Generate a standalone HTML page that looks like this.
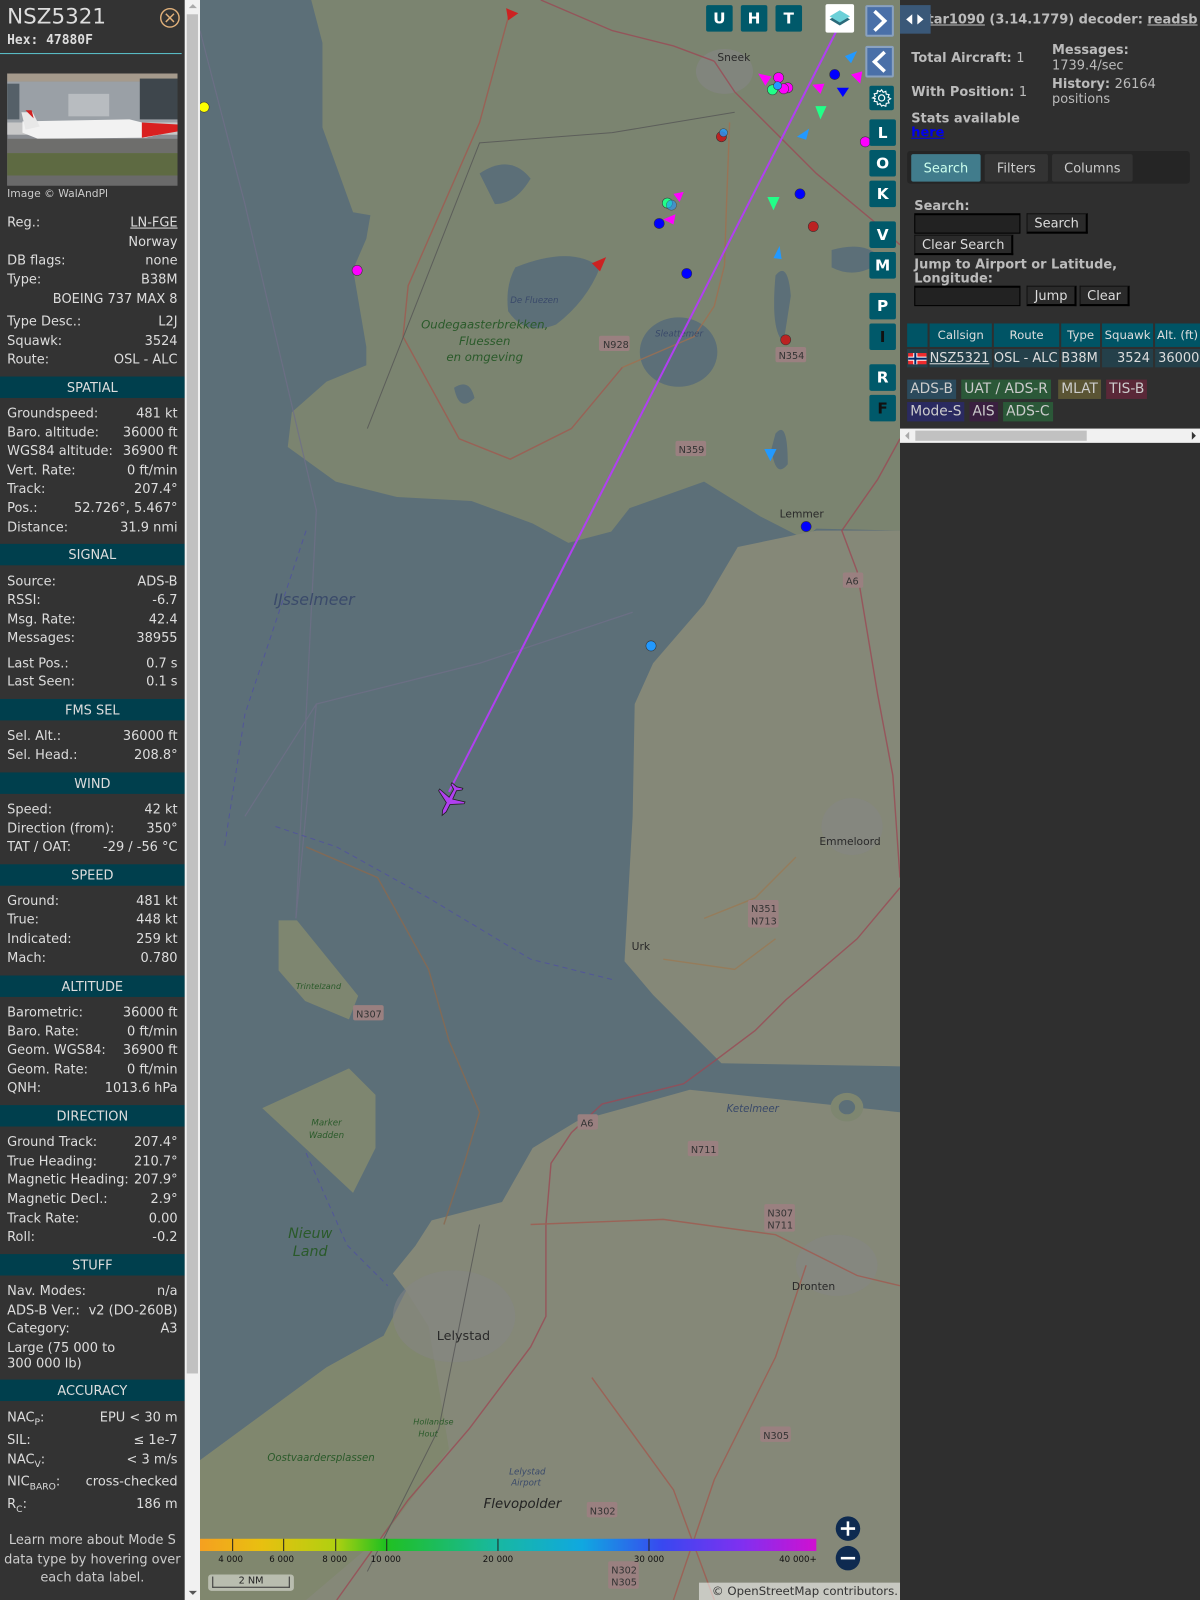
<!DOCTYPE html>
<html><head><meta charset="utf-8">
<style>
html,body{margin:0;padding:0;width:1200px;height:1600px;overflow:hidden;background:#333;}
#w{position:absolute;left:0;top:0;width:1176px;height:1568px;transform:scale(1.020408);transform-origin:0 0;font-family:"DejaVu Sans","Liberation Sans",sans-serif;color:#ddd;font-size:12.7px;}
.a{position:absolute;}
#lp{position:absolute;left:0;top:0;width:181px;height:1568px;background:#333;}
.r{position:absolute;left:7px;right:7px;height:16px;line-height:16px;white-space:nowrap;}
.r b{font-weight:normal;float:right;}
.h{position:absolute;left:0;width:181px;height:21px;line-height:21px;background:#003f4d;text-align:center;color:#ddd;}
#sb{position:absolute;left:181px;top:0;width:15px;height:1568px;background:#f1f1f1;}
#map{position:absolute;left:196px;top:0;width:686px;height:1568px;overflow:hidden;background:#5c6f78;}
.btn{position:absolute;width:26px;height:26px;background:#00596a;color:#fff;font-weight:bold;font-size:15px;text-align:center;line-height:26px;border-radius:2px;font-family:"DejaVu Sans",sans-serif;}
#rp{position:absolute;left:882px;top:0;width:294px;height:1568px;background:#2f2f2f;color:#bbb;}
.t{position:absolute;font-weight:bold;color:#bbb;}
.inp{position:absolute;background:#222;border:1px solid #000;border-top:2px solid #000;}
.bt{position:absolute;background:#2a2a2a;border:1px solid #111;border-right:2px solid #000;border-bottom:2px solid #000;color:#ddd;line-height:17px;text-align:center;font-size:12.7px;}
.th{position:absolute;top:317px;height:23px;line-height:23px;background:#005465;color:#ddd;text-align:center;font-size:11.5px;}
.td{position:absolute;top:342px;height:18px;line-height:18px;background:#24404a;color:#ddd;font-size:12.7px;}
.lg{position:absolute;height:19px;line-height:19px;padding:0 3px;font-size:13.5px;color:#ccc;}
</style></head><body><div id="w">

<div id="lp">
<div class="a" style="left:7px;top:4px;font-size:21px;color:#ddd;">NSZ5321</div>
<div class="a" style="left:7px;top:31px;font-size:12.7px;font-weight:bold;font-family:'DejaVu Sans Mono','Liberation Mono',monospace;color:#ddd;">Hex: 47880F</div>
<svg class="a" style="left:156px;top:7px" width="21" height="21"><circle cx="10.5" cy="10.5" r="9" fill="none" stroke="#e0b07a" stroke-width="1.4"/><path d="M6.5 6.5L14.5 14.5M14.5 6.5L6.5 14.5" stroke="#e0b07a" stroke-width="1.4"/></svg>
<div class="a" style="left:0;top:52px;width:178px;height:1px;background:#5ac3cc;"></div>
<svg class="a" style="left:7px;top:72px" width="167" height="110">
<rect width="167" height="110" fill="#8a8d92"/>
<rect width="167" height="8" fill="#a59a8c"/>
<rect y="8" width="167" height="40" fill="#9aa0a6"/>
<rect x="0" y="10" width="12" height="35" fill="#556068"/><rect x="130" y="5" width="37" height="40" fill="#3e464c"/>
<rect x="60" y="20" width="40" height="22" fill="#b8bcc0"/>
<rect y="48" width="167" height="12" fill="#c8c8c8"/>
<path d="M15 47 L120 45 L140 50 L168 56 L135 63 L30 64 L15 58Z" fill="#f2f2f2"/>
<path d="M132 48 L168 50 L172 56 L132 63Z" fill="#d92020"/>
<path d="M14 38 L25 38 L32 52 L18 55Z" fill="#e8e8e8"/><path d="M18 36 L24 36 L26 44Z" fill="#d02020"/>
<rect y="64" width="167" height="14" fill="#6e6e6c"/>
<rect y="78" width="167" height="22" fill="#5e6a42"/>
<rect y="100" width="167" height="10" fill="#6a6a6a"/>
</svg>
<div class="a" style="left:7px;top:184px;font-size:10.5px;color:#ccc;">Image © WalAndPl</div>

<div class="r" style="top:210px">Reg.:<b style="text-decoration:underline">LN-FGE</b></div>
<div class="r" style="top:229px"><b>Norway</b></div>
<div class="r" style="top:247px">DB flags:<b>none</b></div>
<div class="r" style="top:266px">Type:<b>B38M</b></div>
<div class="r" style="top:285px"><b>BOEING 737 MAX 8</b></div>
<div class="r" style="top:307px">Type Desc.:<b>L2J</b></div>
<div class="r" style="top:326px">Squawk:<b>3524</b></div>
<div class="r" style="top:344px">Route:<b>OSL - ALC</b></div>
<div class="h" style="top:369px">SPATIAL</div>
<div class="r" style="top:397px">Groundspeed:<b>481 kt</b></div>
<div class="r" style="top:416px">Baro. altitude:<b>36000 ft</b></div>
<div class="r" style="top:434px">WGS84 altitude:<b>36900 ft</b></div>
<div class="r" style="top:453px">Vert. Rate:<b>0 ft/min</b></div>
<div class="r" style="top:471px">Track:<b>207.4°</b></div>
<div class="r" style="top:490px">Pos.:<b>52.726°, 5.467°</b></div>
<div class="r" style="top:509px">Distance:<b>31.9 nmi</b></div>
<div class="h" style="top:533px">SIGNAL</div>
<div class="r" style="top:562px">Source:<b>ADS-B</b></div>
<div class="r" style="top:580px">RSSI:<b>-6.7</b></div>
<div class="r" style="top:599px">Msg. Rate:<b>42.4</b></div>
<div class="r" style="top:617px">Messages:<b>38955</b></div>
<div class="r" style="top:642px">Last Pos.:<b>0.7 s</b></div>
<div class="r" style="top:660px">Last Seen:<b>0.1 s</b></div>
<div class="h" style="top:685px">FMS SEL</div>
<div class="r" style="top:713px">Sel. Alt.:<b>36000 ft</b></div>
<div class="r" style="top:732px">Sel. Head.:<b>208.8°</b></div>
<div class="h" style="top:757px">WIND</div>
<div class="r" style="top:785px">Speed:<b>42 kt</b></div>
<div class="r" style="top:804px">Direction (from):<b>350°</b></div>
<div class="r" style="top:822px">TAT / OAT:<b>-29 / -56 °C</b></div>
<div class="h" style="top:847px">SPEED</div>
<div class="r" style="top:875px">Ground:<b>481 kt</b></div>
<div class="r" style="top:893px">True:<b>448 kt</b></div>
<div class="r" style="top:912px">Indicated:<b>259 kt</b></div>
<div class="r" style="top:931px">Mach:<b>0.780</b></div>
<div class="h" style="top:956px">ALTITUDE</div>
<div class="r" style="top:984px">Barometric:<b>36000 ft</b></div>
<div class="r" style="top:1003px">Baro. Rate:<b>0 ft/min</b></div>
<div class="r" style="top:1021px">Geom. WGS84:<b>36900 ft</b></div>
<div class="r" style="top:1040px">Geom. Rate:<b>0 ft/min</b></div>
<div class="r" style="top:1058px">QNH:<b>1013.6 hPa</b></div>
<div class="h" style="top:1083px">DIRECTION</div>
<div class="r" style="top:1111px">Ground Track:<b>207.4°</b></div>
<div class="r" style="top:1130px">True Heading:<b>210.7°</b></div>
<div class="r" style="top:1148px">Magnetic Heading:<b>207.9°</b></div>
<div class="r" style="top:1167px">Magnetic Decl.:<b>2.9°</b></div>
<div class="r" style="top:1186px">Track Rate:<b>0.00</b></div>
<div class="r" style="top:1204px">Roll:<b>-0.2</b></div>
<div class="h" style="top:1229px">STUFF</div>
<div class="r" style="top:1257px">Nav. Modes:<b>n/a</b></div>
<div class="r" style="top:1276px">ADS-B Ver.:<b>v2 (DO-260B)</b></div>
<div class="r" style="top:1294px">Category:<b>A3</b></div>
<div class="r" style="top:1313px">Large (75 000 to</div>
<div class="r" style="top:1328px">300 000 lb)</div>
<div class="h" style="top:1352px">ACCURACY</div>
<div class="r" style="top:1381px">NAC<sub style="font-size:9px">P</sub>:<b>EPU &lt; 30 m</b></div>
<div class="r" style="top:1403px">SIL:<b>≤ 1e-7</b></div>
<div class="r" style="top:1422px">NAC<sub style="font-size:9px">V</sub>:<b>&lt; 3 m/s</b></div>
<div class="r" style="top:1444px">NIC<sub style="font-size:9px">BARO</sub>:<b>cross-checked</b></div>
<div class="r" style="top:1466px">R<sub style="font-size:9px">C</sub>:<b>186 m</b></div>
<div class="a" style="left:0;width:181px;top:1500px;text-align:center;line-height:18.5px;color:#ccc;">Learn more about Mode S data type by hovering over each data label.</div>
</div>
<div id="sb"><div class="a" style="left:2px;top:14px;width:11px;height:1332px;background:#c1c1c1;"></div>
<div class="a" style="left:4px;top:4px;width:0;height:0;border-left:4px solid transparent;border-right:4px solid transparent;border-bottom:4px solid #aaa;"></div>
<div class="a" style="left:4px;top:1559px;width:0;height:0;border-left:4px solid transparent;border-right:4px solid transparent;border-top:4px solid #555;"></div></div>

<div id="map">
<svg width="686" height="1568" style="position:absolute;left:0;top:0">
<g transform="translate(-196,0)">
<polygon fill="#7b8470" points="305,0 882,0 882,520 800,518 788,528 745,506 690,472 617,498 599,521 557,532 522,513 462,491 389,487 329,472 282,438 286,404 320,374 359,358 359,340 346,264 359,234 363,211 346,208 316,125 316,42"/>
<polygon fill="#858878" points="800,520 882,520 882,1045 707,1042 640,975 612,942 620,800 622,690 640,650 690,592 723,536"/>
<polygon fill="#858878" points="676,1068 882,1090 882,1568 196,1568 196,1431 320,1340 376,1309 398,1265 385,1248 407,1221 423,1196 492,1178 522,1125 565,1099"/>
<polygon fill="#80876e" points="196,1431 320,1340 376,1309 398,1265 420,1300 440,1420 380,1500 300,1568 196,1568"/>
<polygon fill="#7e8670" points="257,1086 342,1047 368,1073 368,1125 346,1169 299,1125"/>
<polygon fill="#7e8670" points="273,902 291,902 351,976 342,999 299,981 273,951"/>
<ellipse cx="830" cy="1085" rx="16" ry="14" fill="#7e8670"/><ellipse cx="830" cy="1085" rx="8" ry="7" fill="#5c6f78"/>
<!-- lakes in Friesland -->
<path d="M505 262 Q560 240 588 262 Q575 295 545 318 Q515 330 498 305 Q495 280 505 262Z" fill="#5c6f78"/>
<path d="M470 170 Q500 150 520 175 Q505 200 485 200Z" fill="#5c6f78"/>
<ellipse cx="665" cy="345" rx="38" ry="34" fill="#5c6f78"/>
<path d="M445 380 Q460 370 465 390 Q450 405 445 380Z" fill="#5c6f78"/>
<path d="M760 270 Q772 255 775 290 L768 335 Q755 325 760 270Z" fill="#5c6f78"/>
<path d="M760 425 Q772 410 772 455 Q760 470 756 440Z" fill="#5c6f78"/>
<path d="M815 245 Q850 235 865 255 Q840 275 815 262Z" fill="#5c6f78"/>
<!-- towns -->
<ellipse cx="710" cy="70" rx="28" ry="22" fill="#858585" opacity=".6"/>
<ellipse cx="820" cy="1240" rx="40" ry="30" fill="#858585" opacity=".5"/>
<ellipse cx="445" cy="1290" rx="60" ry="45" fill="#858585" opacity=".5"/>
<ellipse cx="835" cy="810" rx="30" ry="28" fill="#858585" opacity=".5"/>
<!-- roads -->
<g fill="none" stroke-width="1.4" opacity=".8">
<path d="M530 0 L600 30 L660 45 L700 60" stroke="#9a4a55"/>
<path d="M500 10 L470 120 L400 280 L395 330 L450 430 L500 450 L560 420 L610 360" stroke="#a05a50"/>
<path d="M700 60 L720 90 L760 130 L800 170 L860 220 L882 240" stroke="#9a4a55"/>
<path d="M882 430 L860 470 L825 520 L840 560 L860 680 L875 760 L882 860" stroke="#9a4a55"/>
<path d="M882 870 L840 920 L770 980 L740 1010 L700 1040 L670 1062 L590 1082 L560 1110 L540 1140 L535 1200 L535 1290 L520 1320 L460 1400 L400 1470 L330 1568" stroke="#9a4a55"/>
<path d="M610 360 L680 330 L700 300 L710 260 L712 200 L715 120" stroke="#a07050"/>
<path d="M300 830 L370 860 L420 950 L440 1020 L470 1090 L455 1140 L435 1200" stroke="#8a6a50"/>
<path d="M520 1200 L650 1195 L760 1210 L840 1250 L882 1260" stroke="#a05a50"/>
<path d="M790 1240 L760 1330 L700 1450 L660 1568" stroke="#a05a50"/>
<path d="M580 1350 L660 1460 L700 1568" stroke="#a05a50"/>
<path d="M690 900 L740 880 L780 840 M650 940 L720 950 L760 920" stroke="#9a7a55"/>
<path d="M196 30 L240 200 L310 500 L300 700 L290 900" stroke="#6f6f88" stroke-width="1.2"/>
<path d="M240 800 L310 690 L470 650 L620 600" stroke="#6f6f88" stroke-width="1.2"/>
<path d="M310 690 L290 900" stroke="#6f6f88" stroke-width="1.2"/>
<path d="M270 810 L330 830 L420 880 L520 940 L600 960" stroke="#5050a0" stroke-dasharray="5,4" stroke-width="1"/>
<path d="M300 520 L240 700 L220 830 M300 1130 L340 1220 L380 1260" stroke="#5050a0" stroke-dasharray="5,4" stroke-width="1"/>
<path d="M360 420 L470 140 L600 130 L720 110" stroke="#555" stroke-width="1"/>
<path d="M470 1200 L430 1400 L360 1540" stroke="#555" stroke-width="1"/>
</g>
<!-- labels -->
<g font-family="DejaVu Sans,sans-serif" font-size="10.5" fill="#2a2a2a">
<text x="703" y="60">Sneek</text><text x="764" y="507">Lemmer</text><text x="803" y="828">Emmeloord</text>
<text x="619" y="931">Urk</text><text x="776" y="1264">Dronten</text>
<text x="428" y="1313" font-size="12.5">Lelystad</text>
</g>
<g font-family="DejaVu Sans,sans-serif" font-style="italic" fill="#2a5a2a" font-size="11.5">
<text x="475" y="322" text-anchor="middle">Oudegaasterbrekken,</text><text x="475" y="338" text-anchor="middle">Fluessen</text><text x="475" y="354" text-anchor="middle">en omgeving</text>
<text x="304" y="1213" font-size="14" text-anchor="middle">Nieuw</text><text x="304" y="1231" font-size="14" text-anchor="middle">Land</text>
<text x="320" y="1103" font-size="8.5" text-anchor="middle">Marker</text><text x="320" y="1115" font-size="8.5" text-anchor="middle">Wadden</text>
<text x="290" y="969" font-size="8">Trintelzand</text>
<text x="405" y="1396" font-size="8">Hollandse</text><text x="410" y="1408" font-size="8">Hout</text>
<text x="262" y="1432" font-size="10">Oostvaardersplassen</text>
<text x="474" y="1478" font-size="13" fill="#222">Flevopolder</text>
</g>
<g font-family="DejaVu Sans,sans-serif" font-style="italic" fill="#3a4a6a">
<text x="268" y="593" font-size="15.5">IJsselmeer</text>
<text x="712" y="1090" font-size="10">Ketelmeer</text>
<text x="500" y="297" font-size="8.5">De Fluezen</text>
<text x="642" y="330" font-size="8.5">Sleattemer</text>
<text x="499" y="1445" font-size="8.5">Lelystad</text><text x="501" y="1456" font-size="8.5">Airport</text>
</g>
<g font-family="DejaVu Sans,sans-serif" font-size="9.5" fill="#333">
<rect x="587" y="329" width="30" height="15" fill="#9a8080" rx="2"/><text x="591" y="341">N928</text>
<rect x="760" y="340" width="30" height="15" fill="#9a8080" rx="2"/><text x="763" y="352">N354</text>
<rect x="662" y="432" width="30" height="15" fill="#9a8080" rx="2"/><text x="665" y="444">N359</text>
<rect x="826" y="561" width="20" height="15" fill="#9a8080" rx="2"/><text x="829" y="573">A6</text>
<rect x="733" y="882" width="30" height="27" fill="#9a8080" rx="2"/><text x="736" y="894">N351</text><text x="736" y="906">N713</text>
<rect x="346" y="985" width="30" height="15" fill="#9a8080" rx="2"/><text x="349" y="997">N307</text>
<rect x="566" y="1092" width="20" height="15" fill="#9a8080" rx="2"/><text x="569" y="1104">A6</text>
<rect x="674" y="1118" width="30" height="15" fill="#9a8080" rx="2"/><text x="677" y="1130">N711</text>
<rect x="749" y="1180" width="30" height="27" fill="#9a8080" rx="2"/><text x="752" y="1192">N307</text><text x="752" y="1204">N711</text>
<rect x="745" y="1398" width="30" height="15" fill="#9a8080" rx="2"/><text x="748" y="1410">N305</text>
<rect x="575" y="1472" width="30" height="15" fill="#9a8080" rx="2"/><text x="578" y="1484">N302</text>
<rect x="596" y="1530" width="30" height="27" fill="#9a8080" rx="2"/><text x="599" y="1542">N302</text><text x="599" y="1554">N305</text>
</g>
<!-- track -->
<line x1="826" y1="18" x2="440" y2="776" stroke="#b040f0" stroke-width="2"/>
<path transform="translate(441,784) rotate(207)" d="M0-17 L2-12 L2-4 L14 3 L14 5 L2 2 L1.5 11 L6 14 L6 16 L0 14.5 L-6 16 L-6 14 L-1.5 11 L-2 2 L-14 5 L-14 3 L-2-4 L-2-12Z" fill="#b040f0" stroke="#222" stroke-width="0.8"/>
<!-- dots -->
<g stroke="#333" stroke-width="0.5">
<circle cx="200" cy="105" r="5" fill="#ff0"/><circle cx="350" cy="265" r="5" fill="#f0f"/>
<circle cx="707" cy="134" r="5" fill="#b22"/><circle cx="709" cy="130" r="4" fill="#29f" opacity=".8"/>
<circle cx="646" cy="219" r="5" fill="#00f"/><circle cx="654" cy="199" r="5" fill="#2f8"/><circle cx="658" cy="201" r="5" fill="#29f" opacity=".6"/>
<circle cx="673" cy="268" r="5" fill="#00f"/><circle cx="784" cy="190" r="5" fill="#00f"/><circle cx="797" cy="222" r="5" fill="#b22"/>
<circle cx="770" cy="333" r="5" fill="#b22"/><circle cx="790" cy="516" r="5" fill="#00f"/><circle cx="638" cy="633" r="5" fill="#29f"/>
<circle cx="818" cy="73" r="5" fill="#00f"/><circle cx="848" cy="139" r="5" fill="#f0f"/>
<circle cx="763" cy="76" r="5" fill="#f0f"/><circle cx="772" cy="86" r="5" fill="#f0f"/><circle cx="768" cy="87" r="5" fill="#f0f"/>
<circle cx="757" cy="88" r="5" fill="#2f8"/><circle cx="762" cy="84" r="4" fill="#29f"/>
</g>
<g stroke="none">
<path d="M496 8 L508 13 L498 20Z" fill="#c22"/><path d="M580 258 L594 252 L588 266Z" fill="#c22"/>
<path d="M743 72 L756 75 L750 84Z" fill="#f0f"/><path d="M834 73 L845 70 L843 82Z" fill="#f0f"/><path d="M796 83 L808 82 L804 92Z" fill="#f0f"/>
<path d="M820 86 L832 86 L826 95Z" fill="#00f"/><path d="M828 55 L840 50 L834 62Z" fill="#29f"/>
<path d="M799 104 L810 104 L804 117Z" fill="#2f8"/><path d="M752 193 L764 193 L758 206Z" fill="#2f8"/>
<path d="M758 253 L764 241 L766 254Z" fill="#29f"/><path d="M781 134 L793 126 L790 137Z" fill="#29f"/>
<path d="M749 440 L761 440 L755 452Z" fill="#29f"/><path d="M660 190 L670 188 L666 198Z" fill="#f0f"/><path d="M650 215 L662 210 L660 220Z" fill="#f0f"/>
</g>
<!-- colour bar -->
<defs><linearGradient id="cb" x1="0" x2="1"><stop offset="0" stop-color="#f5a020"/><stop offset=".1" stop-color="#e8c010"/><stop offset=".22" stop-color="#b0d010"/><stop offset=".3" stop-color="#20c020"/><stop offset=".48" stop-color="#18b8a0"/><stop offset=".62" stop-color="#10a8e0"/><stop offset=".75" stop-color="#3848f0"/><stop offset=".88" stop-color="#8030f0"/><stop offset="1" stop-color="#d010d0"/></linearGradient></defs>
<rect x="196" y="1508" width="604" height="12" fill="url(#cb)"/>
<g stroke="#222" stroke-width="1"><line x1="228" y1="1508" x2="228" y2="1520"/><line x1="278" y1="1508" x2="278" y2="1520"/><line x1="329" y1="1508" x2="329" y2="1520"/><line x1="379" y1="1508" x2="379" y2="1520"/><line x1="488" y1="1508" x2="488" y2="1520"/><line x1="636" y1="1508" x2="636" y2="1520"/></g>
<g font-family="DejaVu Sans,sans-serif" font-size="8.5" fill="#111" text-anchor="middle">
<text x="226" y="1531">4 000</text><text x="276" y="1531">6 000</text><text x="328" y="1531">8 000</text><text x="378" y="1531">10 000</text><text x="488" y="1531">20 000</text><text x="636" y="1531">30 000</text><text x="782" y="1531">40 000+</text></g>
<circle cx="831" cy="1498" r="12" fill="#0e2a50"/><path d="M824 1498h14M831 1491v14" stroke="#fff" stroke-width="2.5"/>
<circle cx="831" cy="1527" r="12" fill="#0e2a50"/><path d="M824 1527h14" stroke="#fff" stroke-width="2.5"/>
</g></svg>
<div class="a" style="left:8px;top:1543px;width:84px;height:16px;background:rgba(255,255,255,.45);border-radius:3px;"></div>
<div class="a" style="left:12px;top:1545px;width:74px;height:10px;border:1px solid #333;border-top:none;font-size:9.5px;color:#222;text-align:center;line-height:10px;">2 NM</div>
<div class="a" style="left:489px;top:1551px;width:197px;height:17px;background:rgba(255,255,255,.55);font-size:11.5px;color:#333;line-height:17px;text-align:right;padding-right:2px;box-sizing:border-box;">© OpenStreetMap contributors.</div>

<div class="btn" style="left:496px;top:5px">U</div><div class="btn" style="left:530px;top:5px">H</div><div class="btn" style="left:564px;top:5px">T</div>
<div class="a" style="left:613px;top:4px;width:28px;height:28px;background:#fff;border-radius:2px;"><svg width="28" height="28"><path d="M4 15 L14 21 L24 15 L14 9Z" fill="#2a6a7a"/><path d="M4 12 L14 18 L24 12 L14 6Z" fill="#6cd0d8"/></svg></div>
<div class="a" style="left:652px;top:5px;width:28px;height:31px;background:#4a70a8;border:2px solid #8aa2c0;box-sizing:border-box;border-radius:2px;"><svg width="24" height="27"><path d="M7 4 L17 13.5 L7 23" stroke="#fff" stroke-width="3.5" fill="none"/></svg></div>
<div class="a" style="left:652px;top:45px;width:28px;height:31px;background:#4a70a8;border:2px solid #8aa2c0;box-sizing:border-box;border-radius:2px;"><svg width="24" height="27"><path d="M17 4 L7 13.5 L17 23" stroke="#fff" stroke-width="3.5" fill="none"/></svg></div>
<div class="btn" style="left:656px;top:84px;width:24px;height:24px;"><svg width="24" height="24"><circle cx="12" cy="12" r="3" fill="none" stroke="#fff" stroke-width="1.2"/><path d="M12 4 l1.5 2.5 2.6-1 .4 2.8 2.8.4-1 2.6 2.5 1.5-2.5 1.5 1 2.6-2.8.4-.4 2.8-2.6-1L12 20l-1.5-2.5-2.6 1-.4-2.8-2.8-.4 1-2.6L3.2 12l2.5-1.5-1-2.6 2.8-.4.4-2.8 2.6 1Z" fill="none" stroke="#fff" stroke-width="1.1"/></svg></div>
<div class="btn" style="left:656px;top:117px;">L</div><div class="btn" style="left:656px;top:147px;">O</div><div class="btn" style="left:656px;top:177px;">K</div>
<div class="btn" style="left:656px;top:217px;">V</div><div class="btn" style="left:656px;top:247px;">M</div>
<div class="btn" style="left:656px;top:287px;">P</div><div class="btn" style="left:656px;top:317px;color:#111;">I</div>
<div class="btn" style="left:656px;top:357px;">R</div><div class="btn" style="left:656px;top:387px;color:#111;">F</div>
</div>

<div id="rp">
<div class="t" style="left:27px;top:11px;font-size:12.7px;"><span style="text-decoration:underline">tar1090</span> (3.14.1779) decoder: <span style="text-decoration:underline">readsb</span></div>
<div class="a" style="left:0;top:5px;width:30px;height:28px;background:#3a5878;"><svg width="30" height="28"><path d="M12 9 L6 14 L12 19Z M17 9 L23 14 L17 19Z" fill="#fff"/></svg></div>
<div class="t" style="left:11px;top:49px;">Total Aircraft: <span style="font-weight:normal">1</span></div>
<div class="t" style="left:149px;top:41px;">Messages:</div><div class="a" style="left:149px;top:56px;color:#bbb;">1739.4/sec</div>
<div class="t" style="left:11px;top:82px;">With Position: <span style="font-weight:normal">1</span></div>
<div class="t" style="left:149px;top:74px;">History: <span style="font-weight:normal">26164</span></div><div class="a" style="left:149px;top:89px;color:#bbb;">positions</div>
<div class="t" style="left:11px;top:108px;">Stats available</div>
<div class="a" style="left:11px;top:122px;color:#00e;font-weight:bold;text-decoration:underline;">here</div>
<div class="a" style="left:7px;top:148px;width:277px;height:32px;background:#252525;border-radius:3px;"></div>
<div class="a" style="left:11px;top:151px;width:68px;height:27px;background:#417c8c;color:#cfe;line-height:27px;text-align:center;border-radius:2px;">Search</div>
<div class="a" style="left:83px;top:151px;width:62px;height:27px;background:#333;color:#ccc;line-height:27px;text-align:center;border-radius:2px;">Filters</div>
<div class="a" style="left:149px;top:151px;width:79px;height:27px;background:#333;color:#ccc;line-height:27px;text-align:center;border-radius:2px;">Columns</div>
<div class="t" style="left:14px;top:194px;">Search:</div>
<div class="inp" style="left:14px;top:209px;width:102px;height:17px;"></div>
<div class="bt" style="left:124px;top:209px;width:57px;">Search</div>
<div class="bt" style="left:14px;top:230px;width:94px;">Clear Search</div>
<div class="t" style="left:14px;top:251px;">Jump to Airport or Latitude,</div>
<div class="t" style="left:14px;top:265px;">Longitude:</div>
<div class="inp" style="left:14px;top:280px;width:102px;height:17px;"></div>
<div class="bt" style="left:124px;top:280px;width:46px;">Jump</div>
<div class="bt" style="left:176px;top:280px;width:46px;">Clear</div>
<div class="th" style="left:7px;width:20px;"></div>
<div class="th" style="left:29px;width:61px;">Callsign</div>
<div class="th" style="left:92px;width:64px;">Route</div>
<div class="th" style="left:158px;width:38px;">Type</div>
<div class="th" style="left:198px;width:50px;">Squawk</div>
<div class="th" style="left:250px;width:44px;">Alt. (ft)</div>
<div class="td" style="left:7px;width:20px;"><svg width="20" height="18"><rect x="1" y="4" width="18" height="11" fill="#ef2b2d"/><rect x="6" y="4" width="4" height="11" fill="#fff"/><rect x="1" y="7.5" width="18" height="4" fill="#fff"/><rect x="7" y="4" width="2" height="11" fill="#002868"/><rect x="1" y="8.5" width="18" height="2" fill="#002868"/></svg></div>
<div class="td" style="left:29px;width:61px;text-decoration:underline;">NSZ5321</div>
<div class="td" style="left:92px;width:64px;">OSL - ALC</div>
<div class="td" style="left:158px;width:38px;">B38M</div>
<div class="td" style="left:198px;width:50px;text-align:right;box-sizing:border-box;padding-right:3px;">3524</div>
<div class="td" style="left:250px;width:44px;padding-left:3px;box-sizing:border-box;overflow:hidden;">36000</div>
<div class="lg" style="left:7px;top:372px;background:#2b4a5c;">ADS-B</div>
<div class="lg" style="left:60px;top:372px;background:#2b5838;">UAT / ADS-R</div>
<div class="lg" style="left:155px;top:372px;background:#5a5434;">MLAT</div>
<div class="lg" style="left:202px;top:372px;background:#5a2838;">TIS-B</div>
<div class="lg" style="left:7px;top:394px;background:#2a2a60;">Mode-S</div>
<div class="lg" style="left:68px;top:394px;background:#3a2040;">AIS</div>
<div class="lg" style="left:101px;top:394px;background:#2b5838;">ADS-C</div>
<div class="a" style="left:0;top:420px;width:294px;height:14px;background:#f1f1f1;"></div>
<div class="a" style="left:15px;top:422px;width:168px;height:10px;background:#c1c1c1;"></div>
<div class="a" style="left:5px;top:423px;width:0;height:0;border-top:4px solid transparent;border-bottom:4px solid transparent;border-right:4px solid #aaa;"></div>
<div class="a" style="left:286px;top:423px;width:0;height:0;border-top:4px solid transparent;border-bottom:4px solid transparent;border-left:4px solid #333;"></div>
</div>
</div></body></html>
